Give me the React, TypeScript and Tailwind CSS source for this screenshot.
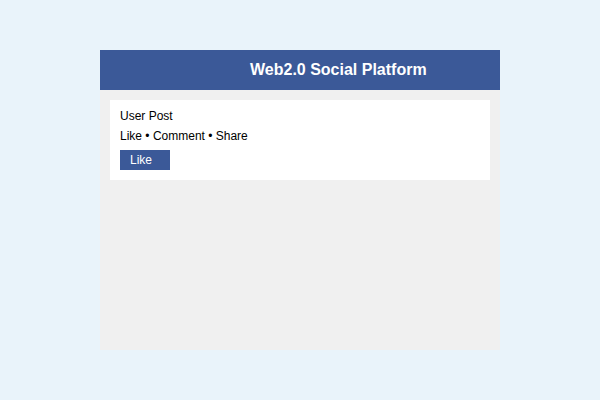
export default function App() {
  return (
    <div className="w-[600px] h-[400px] bg-[#e9f3fa] pt-[50px] flex justify-center" style={{ fontFamily: '"Liberation Sans", Arial, sans-serif' }}>
      <div className="w-[400px] h-[300px] bg-[#f0f0f0] flex flex-col">
        <div className="h-[40px] bg-[#3b5998] flex items-center pl-[150px]">
          <span className="text-white font-bold text-[16px]">Web2.0 Social Platform</span>
        </div>
        <div className="mx-[10px] mt-[10px] bg-white pt-[6px] px-[10px] pb-[10px] text-[12px] text-black">
          <div className="leading-[20px]">User Post</div>
          <div className="leading-[20px]">Like • Comment • Share</div>
          <button className="mt-[4px] w-[50px] h-[20px] bg-[#3b5998] text-white text-left pl-[10px] leading-[20px] text-[12px]">Like</button>
        </div>
      </div>
    </div>
  );
}
